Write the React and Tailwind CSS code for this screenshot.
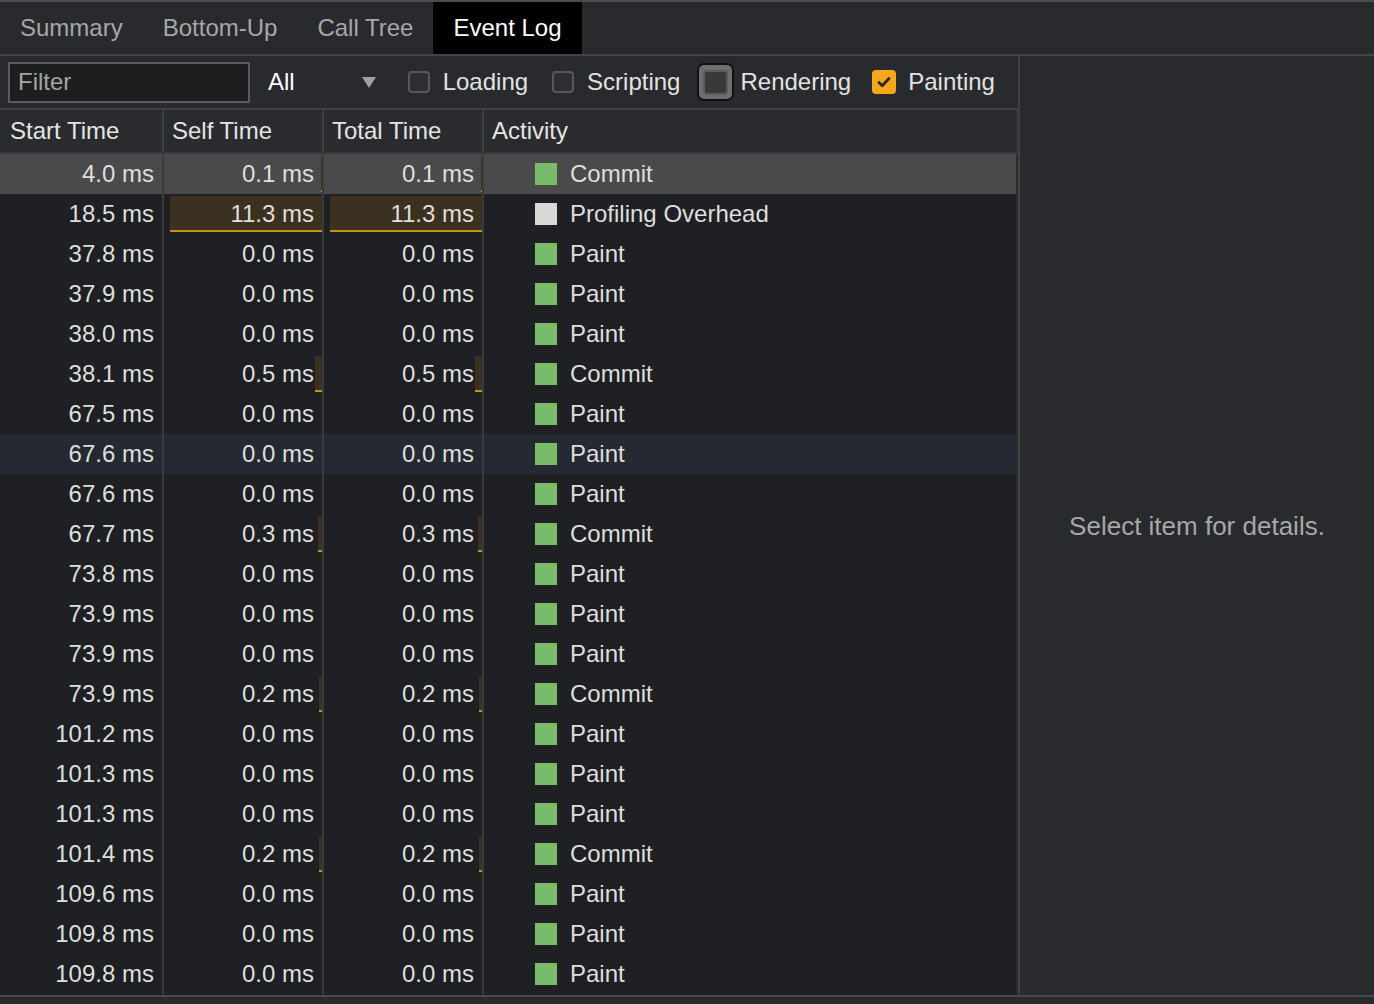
import React from "react";

const rows = [
  ["4.0", "0.1", "0.1", "Commit"],
  ["18.5", "11.3", "11.3", "Profiling Overhead"],
  ["37.8", "0.0", "0.0", "Paint"],
  ["37.9", "0.0", "0.0", "Paint"],
  ["38.0", "0.0", "0.0", "Paint"],
  ["38.1", "0.5", "0.5", "Commit"],
  ["67.5", "0.0", "0.0", "Paint"],
  ["67.6", "0.0", "0.0", "Paint"],
  ["67.6", "0.0", "0.0", "Paint"],
  ["67.7", "0.3", "0.3", "Commit"],
  ["73.8", "0.0", "0.0", "Paint"],
  ["73.9", "0.0", "0.0", "Paint"],
  ["73.9", "0.0", "0.0", "Paint"],
  ["73.9", "0.2", "0.2", "Commit"],
  ["101.2", "0.0", "0.0", "Paint"],
  ["101.3", "0.0", "0.0", "Paint"],
  ["101.3", "0.0", "0.0", "Paint"],
  ["101.4", "0.2", "0.2", "Commit"],
  ["109.6", "0.0", "0.0", "Paint"],
  ["109.8", "0.0", "0.0", "Paint"],
  ["109.8", "0.0", "0.0", "Paint"],
];

function TimeCell({ value, bar }) {
  const v = parseFloat(value);
  const w = bar ? Math.round((v / 11.3) * 152) : 0;
  return (
    <div className="relative h-[40px] flex items-center justify-end pr-2 border-r-2 border-[#3a3b3e]">
      {w > 0 && (
        <div
          className="absolute right-0 top-[2px] bottom-[2px] bg-[#3b3121] border-b-2 border-[#c99213]"
          style={{ width: w + "px" }}
        />
      )}
      <span className="relative">{value} ms</span>
    </div>
  );
}

function Checkbox({ checked }) {
  if (checked) {
    return (
      <div className="w-[24px] h-[24px] rounded-[4px] bg-[#f8a61c] flex items-center justify-center">
        <svg width="18" height="18" viewBox="0 0 18 18" fill="none">
          <path d="M4 9.5l3.2 3.2L14 5.5" stroke="#2c2414" strokeWidth="2.8" strokeLinecap="round" strokeLinejoin="round" />
        </svg>
      </div>
    );
  }
  return <div className="w-[22px] h-[22px] rounded-[4px] border-2 border-[#56575a] bg-[#2e2f32]" />;
}

export default function App() {
  const tabs = ["Summary", "Bottom-Up", "Call Tree", "Event Log"];
  return (
    <div
      className="w-[1374px] h-[1004px] overflow-hidden bg-[#292a2d] text-[24px] leading-none text-[#e2e2e2] border-t-2 border-[#4b4c4f]"
      style={{ fontFamily: '"Liberation Sans", Arial, Helvetica, sans-serif' }}
    >
      {/* Tab bar */}
      <div className="h-[54px] flex items-stretch border-b-2 border-[#434447]">
        {tabs.map((t) => (
          <div
            key={t}
            className={
              "flex items-center px-5 " +
              (t === "Event Log" ? "bg-black text-white" : "text-[#a6a7a9]")
            }
          >
            {t}
          </div>
        ))}
      </div>

      {/* Main */}
      <div className="h-[941px] flex border-b-2 border-[#48494c]">
        {/* Left pane */}
        <div className="w-[1020px] shrink-0 flex flex-col border-r-2 border-[#3f4043] overflow-hidden">
          {/* Toolbar */}
          <div className="h-[54px] shrink-0 flex items-center border-b-2 border-[#3f4043]">
            <div className="ml-2 w-[242px] h-[41px] border-2 border-[#5a5b5e] bg-[#1d1e20] flex items-center pl-[8px] text-[#a3a4a6]">
              Filter
            </div>
            <div className="ml-[18px] flex items-center text-white">
              <span>All</span>
              <svg className="ml-[67px]" width="14" height="11" viewBox="0 0 14 11">
                <path d="M0 0h14L7 11z" fill="#a0a1a3" />
              </svg>
            </div>
            <div className="ml-[32px] flex items-center gap-[13px]">
              <Checkbox />
              <span>Loading</span>
            </div>
            <div className="ml-[24px] flex items-center gap-[13px]">
              <Checkbox />
              <span>Scripting</span>
            </div>
            <div className="ml-[17px] flex items-center gap-[6px]">
              <div className="w-[37px] h-[38px] rounded-[7px] border-2 border-[#111213] bg-[#6d6e70] flex items-center justify-center">
                <div className="w-[25px] h-[25px] rounded-[4px] border-2 border-[#5a5b5d] bg-[#38393b]" />
              </div>
              <span>Rendering</span>
            </div>
            <div className="ml-[21px] flex items-center gap-[12px]">
              <Checkbox checked />
              <span>Painting</span>
            </div>
          </div>

          {/* Header */}
          <div className="h-[44px] shrink-0 grid grid-cols-[164px_160px_160px_1fr] bg-[#2a2b2e] border-b-2 border-[#38393c] text-[#e4e4e4]">
            <div className="flex items-center pl-[10px] border-r-2 border-[#3e3f42]">Start Time</div>
            <div className="flex items-center pl-2 border-r-2 border-[#3e3f42]">Self Time</div>
            <div className="flex items-center pl-2 border-r-2 border-[#3e3f42]">Total Time</div>
            <div className="flex items-center pl-2 border-r-2 border-[#333437]">Activity</div>
          </div>

          {/* Rows */}
          <div className="flex-1 bg-[#1f2023] overflow-hidden">
            {rows.map((r, i) => {
              const bg = i === 0 ? "bg-[#4a4a4b]" : i === 7 ? "bg-[#252a32]" : "";
              const color = r[3] === "Profiling Overhead" ? "bg-[#d8d8d8]" : "bg-[#78bb6b]";
              return (
                <div key={i} className={"grid grid-cols-[164px_160px_160px_1fr] h-[40px] text-[#dedede] " + bg}>
                  <div className="h-[40px] flex items-center justify-end pr-2 border-r-2 border-[#3a3b3e]">
                    {r[0]} ms
                  </div>
                  <TimeCell value={r[1]} bar />
                  <TimeCell value={r[2]} bar />
                  <div className="h-[40px] flex items-center pl-[51px] border-r-2 border-[#2a2b2e]">
                    <div className={"w-[22px] h-[22px] " + color} />
                    <span className="ml-[13px]">{r[3]}</span>
                  </div>
                </div>
              );
            })}
          </div>
        </div>

        {/* Right pane */}
        <div className="flex-1 flex items-center justify-center text-[26px] text-[#a6a7a9]">
          Select item for details.
        </div>
      </div>
    </div>
  );
}
